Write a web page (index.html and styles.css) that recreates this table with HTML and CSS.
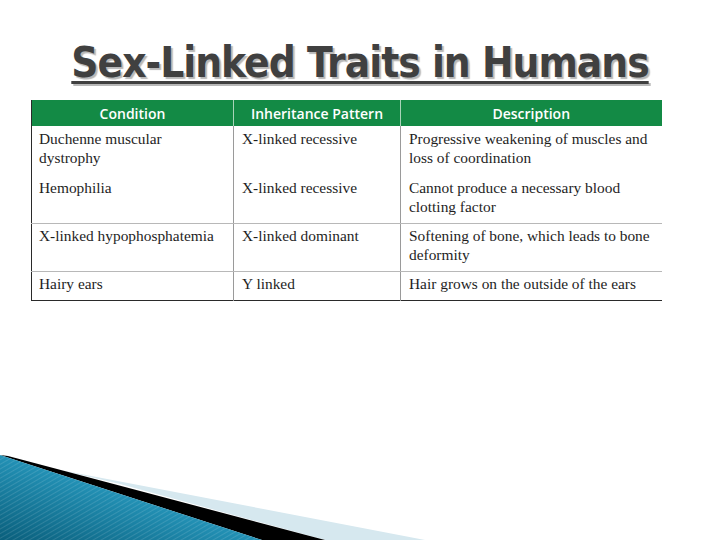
FILE: index.html
```html
<!DOCTYPE html>
<html>
<head>
<meta charset="utf-8">
<link rel="stylesheet" href="styles.css">
</head>
<body>
<div class="slide">
  <h1 class="title">Sex-Linked Traits in Humans</h1>
  <table class="traits">
    <colgroup><col class="c1"><col class="c2"><col class="c3"></colgroup>
    <thead>
      <tr><th>Condition</th><th>Inheritance Pattern</th><th>Description</th></tr>
    </thead>
    <tbody>
      <tr class="r1"><td>Duchenne muscular dystrophy</td><td>X-linked recessive</td><td>Progressive weakening of muscles and loss of coordination</td></tr>
      <tr class="r2 sep"><td>Hemophilia</td><td>X-linked recessive</td><td>Cannot produce a necessary blood clotting factor</td></tr>
      <tr class="r3 sep"><td>X-linked hypophosphatemia</td><td>X-linked dominant</td><td>Softening of bone, which leads to bone deformity</td></tr>
      <tr class="r4"><td>Hairy ears</td><td>Y linked</td><td>Hair grows on the outside of the ears</td></tr>
    </tbody>
  </table>
  <svg class="swoosh" width="720" height="90" viewBox="0 0 720 90">
    <defs>
      <linearGradient id="bg" x1="0" y1="1" x2="1" y2="0">
        <stop offset="0" stop-color="#0a5f7c"/>
        <stop offset="0.55" stop-color="#2596bb"/>
        <stop offset="1" stop-color="#6cc6e4"/>
      </linearGradient>
      <pattern id="st" width="4" height="4" patternUnits="userSpaceOnUse" patternTransform="rotate(60)">
        <rect width="1" height="4" fill="#ffffff" opacity="0.12"/>
      </pattern>
    </defs>
    <polygon points="60,20 425,90 325,90 120,34" fill="#d6e8ef"/>
    <polygon points="8,6 325,90 262,90 0,5" fill="#000"/>
    <polygon points="0,5 262,90 0,90" fill="url(#bg)"/>
    <polygon points="0,5 262,90 0,90" fill="url(#st)"/>
  </svg>
</div>
</body>
</html>
```
FILE: styles.css
```css
html, body {
  margin: 0;
  padding: 0;
  background: #ffffff;
}
.slide {
  position: relative;
  width: 720px;
  height: 540px;
  overflow: hidden;
  background: #ffffff;
}
.title {
  margin: 0;
  padding-top: 40px;
  height: 100px;
  box-sizing: border-box;
  text-align: center;
  font-family: "DejaVu Sans Condensed", "DejaVu Sans", sans-serif;
  font-stretch: condensed;
  font-weight: bold;
  font-size: 42px;
  line-height: 46px;
  letter-spacing: -1px;
  color: #404040;
  text-decoration: underline;
  text-decoration-thickness: 3px;
  text-underline-offset: 4px;
  text-shadow: 2px 2px 1px #b8b8b8;
}
.traits {
  margin-left: 31px;
  width: 630px;
  border-collapse: collapse;
  table-layout: fixed;
  border-left: 1px solid #2a2a2a;
  border-bottom: 1px solid #2a2a2a;
  font-family: "Liberation Serif", "Times New Roman", serif;
  font-size: 15.4px;
  line-height: 19px;
  color: #1e1e1e;
}
.c1 { width: 202px; }
.c2 { width: 167px; }
.c3 { width: 261px; }
.traits th {
  height: 26px;
  padding: 0;
  background: #138a45;
  color: #ffffff;
  font-family: "Open Sans", "DejaVu Sans", sans-serif;
  font-weight: 600;
  font-size: 14px;
  text-align: center;
  vertical-align: middle;
  border-left: 1px solid #a8d4b8;
}
.traits th:first-child { border-left: none; }
.traits td {
  padding: 2px 8px 0 7px;
  vertical-align: top;
  border-left: 1px solid #9a9a9a;
}
.traits td:first-child { border-left: none; }
.traits td + td { padding-left: 8px; }
.r1 td { height: 47px; padding-top: 3px; }
.r2 td { height: 45px; }
.r3 td { height: 45px; }
.r4 td { height: 26px; }
.sep td { border-bottom: 1px solid #b8b8b8; }
.swoosh {
  position: absolute;
  left: 0;
  top: 450px;
}
```
